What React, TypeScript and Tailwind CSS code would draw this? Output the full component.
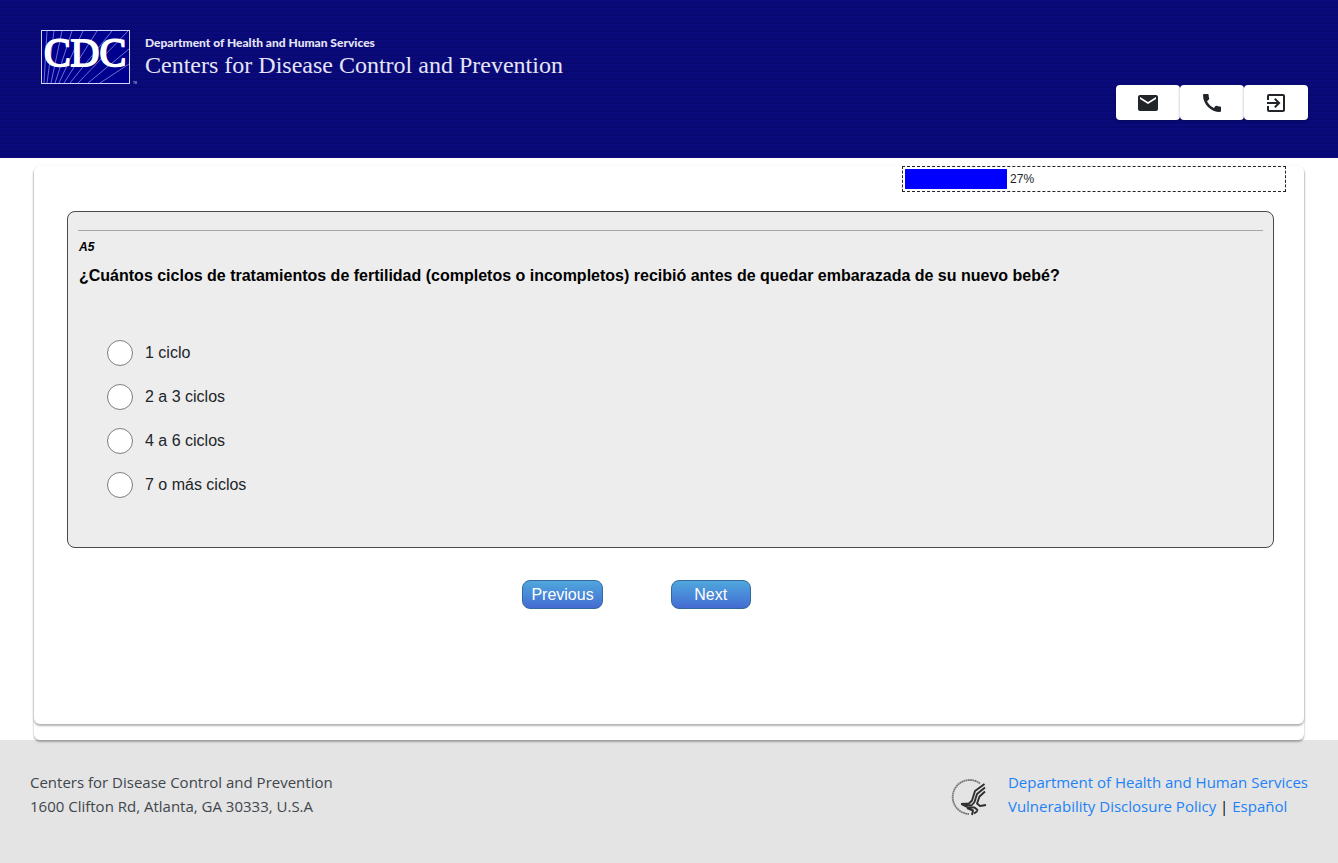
import { MdCall, MdEmail, MdExitToApp } from 'react-icons/md'

const options = ['1 ciclo', '2 a 3 ciclos', '4 a 6 ciclos', '7 o más ciclos']
const progress = 27

export default function App() {
  return (
    <div className="min-h-screen flex flex-col bg-white font-['Liberation_Sans',Arial,sans-serif] text-[#212529]">
      <Header />

      <main className="px-[34px] pt-2">
        <div className="relative rounded-md pb-4 shadow-[0_2px_2px_rgba(0,0,0,0.25),0_1px_3px_rgba(0,0,0,0.1)]">
          <div className="rounded-md bg-white pb-[115px] shadow-[0_2px_2px_rgba(0,0,0,0.25),0_1px_3px_rgba(0,0,0,0.1)]">
            <div className="flex justify-end pr-[18px]">
              <ProgressBar value={progress} />
            </div>
            <form className="pl-[33px] pr-[30px] pt-[19px]" onSubmit={(e) => e.preventDefault()}>
              <Question />
              <div className="flex justify-center gap-[68px] pr-[68px] mt-8">
                <NavButton>Previous</NavButton>
                <NavButton>Next</NavButton>
              </div>
            </form>
          </div>
        </div>
      </main>

      <Footer />
    </div>
  )
}

function Header() {
  return (
    <header className="bg-[#0a0a78] bg-[repeating-linear-gradient(180deg,#0a0a7a_0px,#0a0a7a_2px,#080872_3px,#0a0a7a_4px,#0a0a7a_6px,#05056a_7px,#0a0a7a_8px)] px-[30px] pt-[29px] pb-[38px]">
      <div className="flex gap-2 pl-[11px] text-white">
        <CdcLogo />
        <div className="pt-2">
          <p className="font-[Lato,sans-serif] text-xs leading-3 font-black text-[#e4e4f6]">Department of Health and Human Services</p>
          <p className="font-['Liberation_Serif',serif] text-2xl leading-8 text-[#e4e4f6]">Centers for Disease Control and Prevention</p>
        </div>
      </div>
      <div className="flex justify-end">
        <IconButton label="Email"><MdEmail size={24} /></IconButton>
        <IconButton label="Phone"><MdCall size={24} /></IconButton>
        <IconButton label="Exit"><MdExitToApp size={24} /></IconButton>
      </div>
    </header>
  )
}

function IconButton({ label, children }: { label: string; children: React.ReactNode }) {
  return (
    <button type="button" aria-label={label} className="flex items-center justify-center w-16 h-[35px] rounded bg-white shadow-[0_1px_3px_rgba(0,0,0,0.3)]">
      {children}
    </button>
  )
}

function ProgressBar({ value }: { value: number }) {
  return (
    <div className="flex items-center w-96 max-w-full h-[26px] border border-dashed border-[#212529] p-0.5">
      <div className="h-5 bg-[#0000ff]" style={{ width: `${value}%` }} />
      <span className="pl-[3px] text-xs">{value}%</span>
    </div>
  )
}

function Question() {
  return (
    <fieldset className="rounded-lg border border-[#4a4a4a] bg-[#ededed] px-2.5 pt-[18px] pb-[49px]">
      <hr className="border-[#a6a6a6]" />
      <p className="mt-2 pl-px text-xs leading-4 font-bold italic text-black">A5</p>
      <p className="mt-[9px] pl-px text-base leading-6 font-bold text-black">
        ¿Cuántos ciclos de tratamientos de fertilidad (completos o incompletos) recibió antes de quedar embarazada de su nuevo bebé?
      </p>
      <div className="flex flex-col gap-[18px] pl-[29px] pt-[52px]">
        {options.map((option) => (
          <label key={option} className="flex items-center gap-3 leading-[26px]">
            <input type="radio" name="a5" value={option} className="appearance-none size-[26px] shrink-0 rounded-full border border-[#7d7d7d] bg-white checked:border-8 checked:border-[#456fd6]" />
            {option}
          </label>
        ))}
      </div>
    </fieldset>
  )
}

function NavButton({ children }: { children: React.ReactNode }) {
  return (
    <button type="button" className="min-w-20 h-[29px] px-2 rounded-lg border border-[#34699b] bg-linear-to-b from-[#4fa7dc] to-[#456bd3] text-white text-base leading-6">
      {children}
    </button>
  )
}

function Footer() {
  return (
    <footer className="grow flex flex-wrap items-start justify-between bg-[#e4e4e4] px-[30px] py-[30px] font-['Open_Sans','Noto_Sans',sans-serif] text-[15px] leading-6 text-[#3f464c]">
      <address className="not-italic">
        Centers for Disease Control and Prevention
        <br />
        1600 Clifton Rd, Atlanta, GA 30333, U.S.A
      </address>
      <div className="flex items-end gap-5">
        <HhsLogo />
        <p className="text-black">
          <a href="#hhs" className="text-[#2182f7]">Department of Health and Human Services</a>
          <br />
          <a href="#policy" className="text-[#2182f7]">Vulnerability Disclosure Policy</a> | <a href="#es" className="text-[#2182f7]">Español</a>
        </p>
      </div>
    </footer>
  )
}

function CdcLogo() {
  return (
    <svg width="96" height="56" viewBox="0 0 96 56" role="img" aria-label="CDC" className="shrink-0">
      <rect x="0.5" y="1.5" width="88" height="53" fill="#00008f" stroke="#d4d4f4" />
      <g stroke="#8c8cdc" strokeWidth="0.8" fill="none">
        <path d="M3 54L6 2M6 54L13 2M10 54L21 2M14 54L31 2M18 54L42 2M23 54L56 2M29 54L71 2M37 54L87 2M47 54L88 20M59 54L88 35" />
      </g>
      <text x="44" y="37" textAnchor="middle" textRendering="geometricPrecision" fontFamily="Liberation Serif, serif" fontSize="40" fill="#fff" stroke="#fff" strokeWidth="1.8">CDC</text>
      <text x="92" y="55" fontFamily="Liberation Sans, sans-serif" fontSize="3" fill="#d4d4f4">TM</text>
    </svg>
  )
}

function HhsLogo() {
  return (
    <svg width="38" height="40" viewBox="0 0 38 40" role="img" aria-label="HHS" fill="none" className="shrink-0">
      <path d="M30 5.500A17 17 0 1 0 19 36" stroke="#777" strokeWidth="1.800" strokeDasharray="1.800 0.400" />
      <g stroke="#2e2e2e" strokeWidth="1.900" strokeLinejoin="round">
        <path d="M34.500 6L25 13L22 22.500L19 25.500L11 26" />
        <path d="M35 9.500L27 16L24.500 24L21.500 27.500L15 27" />
        <path d="M35 13.500L29.500 18.500L27 25.500L30 28L36 27" />
        <path d="M12 26.500L18 29.500L24.500 29.500L28 32.500M17 30L23 32.500L22 37M24 35.500L27.500 33" />
      </g>
    </svg>
  )
}
